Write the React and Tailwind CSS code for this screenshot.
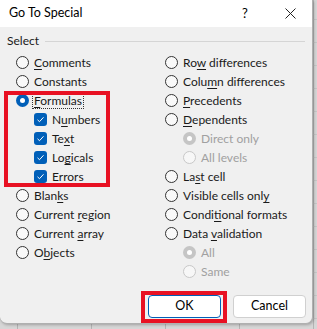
import React from 'react';

const font = { fontFamily: 'Lato, "Noto Sans", sans-serif' };

function U({ children }) {
  return <span className="underline underline-offset-2 decoration-1">{children}</span>;
}

function Radio({ checked, disabled }) {
  if (checked && !disabled) {
    return (
      <span className="w-[13px] h-[13px] rounded-full bg-[#005fb8] flex items-center justify-center shrink-0">
        <span className="w-[5px] h-[5px] rounded-full bg-white" />
      </span>
    );
  }
  if (checked && disabled) {
    return (
      <span className="w-[13px] h-[13px] rounded-full bg-[#c5c5c5] flex items-center justify-center shrink-0">
        <span className="w-[5px] h-[5px] rounded-full bg-white" />
      </span>
    );
  }
  return (
    <span
      className={
        'w-[13px] h-[13px] rounded-full border shrink-0 ' +
        (disabled ? 'border-[#c8c8c8] bg-[#f7f7f7]' : 'border-[#333] bg-[#f9f9f9]')
      }
    />
  );
}

function Check() {
  return (
    <span className="w-[13px] h-[13px] rounded-[3px] bg-[#005fb8] flex items-center justify-center shrink-0">
      <svg width="9" height="9" viewBox="0 0 9 9" fill="none">
        <path d="M1.5 4.8 L3.5 6.7 L7.5 2.3" stroke="white" strokeWidth="1" />
      </svg>
    </span>
  );
}

function Row({ indent, children, checkbox, checked, disabled, focus }) {
  return (
    <div className={'flex items-center h-[19px] gap-[4px] ' + (indent ? 'pl-[18px]' : '')}>
      {checkbox ? <Check /> : <Radio checked={checked} disabled={disabled} />}
      <span
        className={
          'leading-[15px] px-[1px] ' +
          (disabled ? 'text-[#a0a0a0] ' : 'text-[#1a1a1a] ') +
          (focus ? 'outline outline-1 outline-dotted outline-[#333]' : '')
        }
      >
        {children}
      </span>
    </div>
  );
}

export default function App() {
  return (
    <div
      className="w-[317px] h-[329px] overflow-hidden bg-[#d6d6d6] relative text-[12px]"
      style={font}
    >
      <div className="absolute inset-0 bg-[repeating-linear-gradient(to_right,transparent_0,transparent_17px,#b4b4b4_17px,#b4b4b4_18px,transparent_18px,transparent_74px)]" />
      <div className="absolute inset-0 bg-[repeating-linear-gradient(to_bottom,transparent_0,transparent_19px,#bdbdbd_19px,#bdbdbd_20px,transparent_20px,transparent_23px)] opacity-60" />
      <div className="relative w-[313px] h-[324px] bg-[#f0f0f0] rounded-b-[7px] border-r border-b border-[#b0b0b0] flex flex-col shadow-[1px_1px_3px_rgba(0,0,0,0.25)]">
        <div className="h-[27px] bg-white flex items-center pl-[9px] shrink-0">
          <span className="text-[12.5px] text-black flex-1">Go To Special</span>
          <span className="text-[13px] text-black w-[12px] mr-[31px]">?</span>
          <svg width="11" height="11" viewBox="0 0 11 11" className="mr-[16px]">
            <path d="M0.5 0.5 L10.5 10.5 M10.5 0.5 L0.5 10.5" stroke="#222" strokeWidth="1" />
          </svg>
        </div>

        <div className="flex items-center pl-[7px] pr-[7px] mt-[5px] h-[18px]">
          <span className="text-[#1a1a1a]">Select</span>
          <div className="flex-1 h-px bg-[#d5d5d5] ml-[6px]" />
        </div>

        <div className="grid grid-cols-[149px_1fr] mt-[3px] pl-[16px]">
          <div className="flex flex-col relative">
            <Row><U>C</U>omments</Row>
            <Row>Constants</Row>
            <div className="relative">
              <div className="absolute left-[-12px] top-[0px] w-[106px] h-[96px] border-[4px] border-[#e81123] pointer-events-none" />
              <Row checked focus><U>F</U>ormulas</Row>
              <Row indent checkbox>N<U>u</U>mbers</Row>
              <Row indent checkbox>Te<U>x</U>t</Row>
              <Row indent checkbox>Lo<U>g</U>icals</Row>
              <Row indent checkbox><U>E</U>rrors</Row>
            </div>
            <Row>Blan<U>k</U>s</Row>
            <Row>Current <U>r</U>egion</Row>
            <Row>Current <U>a</U>rray</Row>
            <Row>O<U>b</U>jects</Row>
          </div>
          <div className="flex flex-col">
            <Row>Ro<U>w</U> differences</Row>
            <Row>Colu<U>m</U>n differences</Row>
            <Row><U>P</U>recedents</Row>
            <Row><U>D</U>ependents</Row>
            <Row indent checked disabled>Direct only</Row>
            <Row indent disabled>All levels</Row>
            <Row>La<U>s</U>t cell</Row>
            <Row>Visible cells onl<U>y</U></Row>
            <Row>Condi<U>t</U>ional formats</Row>
            <Row>Data <U>v</U>alidation</Row>
            <Row indent checked disabled>All</Row>
            <Row indent disabled>Same</Row>
          </div>
        </div>

        <div className="flex justify-end items-start gap-[6px] pr-[6px] mt-auto mb-[0px]">
          <div className="border-[4px] border-[#e81123] pl-[3px] pr-[2px] pt-0 pb-[1px]">
            <button className="w-[73px] h-[23px] rounded-[4px] border border-[#005fb8] bg-white text-[12.5px] text-black flex items-center justify-center">
              OK
            </button>
          </div>
          <button className="mt-[4px] w-[73px] h-[23px] rounded-[4px] border border-[#d0d0d0] bg-white text-[12.5px] text-black flex items-center justify-center">
            Cancel
          </button>
        </div>
      </div>
    </div>
  );
}
